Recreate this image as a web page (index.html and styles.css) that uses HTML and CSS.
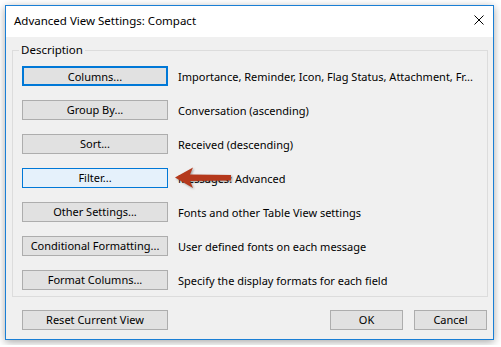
FILE: index.html
```html
<!DOCTYPE html>
<html lang="en">
<head>
  <meta charset="UTF-8" />
  <title>Advanced View Settings: Compact</title>
  <link rel="stylesheet" href="styles.css">
</head>
<body>
  <!-- Dialog window -->
  <div class="dialog">
    <div class="titlebar">
      <span class="title">Advanced View Settings: Compact</span>
      <svg class="close" width="10" height="10" viewBox="0 0 10 10">
        <path d="M0.5 0.5 L9.5 9.5 M9.5 0.5 L0.5 9.5" stroke="#000" stroke-width="1" fill="none"/>
      </svg>
    </div>

    <div class="content">
      <fieldset class="group">
        <legend>Description</legend>

        <div class="row">
          <button class="btn btn-default">Columns...</button>
          <span class="desc">Importance, Reminder, Icon, Flag Status, Attachment, Fr...</span>
        </div>
        <div class="row">
          <button class="btn">Group By...</button>
          <span class="desc">Conversation (ascending)</span>
        </div>
        <div class="row">
          <button class="btn">Sort...</button>
          <span class="desc">Received (descending)</span>
        </div>
        <div class="row">
          <button class="btn btn-hover">Filter...</button>
          <span class="desc">Messages: Advanced
            <!-- red arrow pointing at the filter button -->
            <svg class="arrow" width="58" height="23" viewBox="0 0 58 23">
              <path d="M0 10.5 L18 0.5 L15 7.5 L56 8 L56 13.5 L15 14 L18 21 Z" fill="#b5391c"/>
            </svg>
          </span>
        </div>
        <div class="row">
          <button class="btn">Other Settings...</button>
          <span class="desc">Fonts and other Table View settings</span>
        </div>
        <div class="row">
          <button class="btn">Conditional Formatting...</button>
          <span class="desc">User defined fonts on each message</span>
        </div>
        <div class="row">
          <button class="btn">Format Columns...</button>
          <span class="desc">Specify the display formats for each field</span>
        </div>
      </fieldset>

      <div class="footer">
        <button class="btn">Reset Current View</button>
        <div class="spacer"></div>
        <button class="btn btn-small">OK</button>
        <button class="btn btn-small">Cancel</button>
      </div>
    </div>
  </div>
</body>
</html>
```

FILE: styles.css
```css
body {
  margin: 0;
  background: #ffffff;
  font-family: 'Noto Sans', 'Open Sans', sans-serif;
  font-size: 11px;
  color: #000;
}

.dialog {
  margin: 5px;
  width: 487px;
  height: 333px;
  border: 1px solid #1a7fd5;
  background: #f0f0f0;
  box-shadow: 0 2px 8px rgba(0, 0, 0, 0.35);
  display: flex;
  flex-direction: column;
}

.titlebar {
  height: 31px;
  background: #ffffff;
  display: flex;
  align-items: center;
  padding: 0 9px 0 8px;
}

.title {
  flex: 1;
  font-size: 11.5px;
  margin-top: -2px;
}

.close {
  margin-top: -3px;
}

.content {
  padding-top: 5px;
}

.group {
  margin: 0 5px 0 6px;
  padding: 8px 0 6px 9px;
  border: 1px solid #dcdcdc;
}

.group legend {
  padding: 0 2px;
  margin-left: -3px;
  line-height: 16px;
  font-size: 11.5px;
}

.row {
  display: flex;
  align-items: center;
  height: 20px;
  margin-bottom: 14px;
}

.row:last-child {
  margin-bottom: 0;
}

.btn {
  width: 146px;
  height: 20px;
  padding: 0;
  margin: 0;
  background: #e1e1e1;
  border: 1px solid #adadad;
  font-family: inherit;
  font-size: 11px;
  color: #000;
  line-height: 18px;
}

.btn-default {
  border: 2px solid #0078d7;
}

.btn-hover {
  background: #e5f1fb;
  border-color: #0078d7;
}

.desc {
  margin-left: 10px;
  position: relative;
  white-space: nowrap;
}

.arrow {
  position: absolute;
  left: -3px;
  top: -4px;
  filter: drop-shadow(1px 1px 1px rgba(0, 0, 0, 0.35));
}

.footer {
  display: flex;
  margin-top: 13px;
  padding: 0 6px 0 16px;
}

.spacer {
  flex: 1;
}

.btn-small {
  width: 73px;
  margin-left: 11px;
}
```
